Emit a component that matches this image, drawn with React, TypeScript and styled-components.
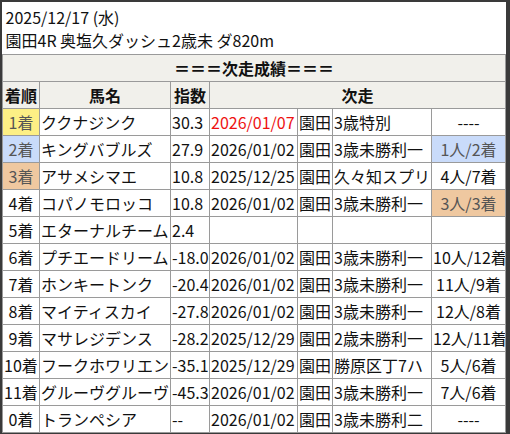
import React from "react";
import styled, { createGlobalStyle } from "styled-components";

const Global = createGlobalStyle`
  html, body { margin: 0; padding: 0; background: #3a3a3a; }
  body { font-family: "Noto Sans CJK JP", "Noto Sans", sans-serif; }
`;

const Frame = styled.div`
  padding: 2px 5px 3px 2px;
  width: 510px;
  box-sizing: border-box;
`;

const Table = styled.table`
  width: 503px;
  table-layout: fixed;
  border-collapse: collapse;
  background: #fff;
  font-size: 16px;
  color: #111;
`;

const Td = styled.td<{ $align?: "left" | "center"; $bg?: string; $color?: string; $bold?: boolean }>`
  border: 1px solid #9a9a9a;
  padding: 1px 1px;
  height: 24px;
  line-height: 24px;
  text-align: ${(p) => p.$align ?? "left"};
  background: ${(p) => p.$bg ?? "transparent"};
  color: ${(p) => p.$color ?? "#111"};
  font-weight: ${(p) => (p.$bold ? 700 : 400)};
  white-space: nowrap;
  overflow: hidden;
  vertical-align: middle;
`;

const TitleCell = styled.td`
  border: 1px solid #9a9a9a;
  border-top: none;
  border-left: none;
  border-right: none;
  padding: 4px 3px 2px;
  line-height: 23px;
  color: #111;
`;

const HeadCell = styled(Td)`
  background: #f1f0eb;
  font-weight: 700;
  text-align: center;
`;

type Row = {
  pos: string;
  posBg?: string;
  name: string;
  idx: string;
  date?: string;
  red?: boolean;
  venue?: string;
  race?: string;
  res?: string;
  resBg?: string;
};

const YELLOW = "#fdef85";
const BLUE = "#c9dbfa";
const PEACH = "#efc8a0";

const rows: Row[] = [
  { pos: "1着", posBg: YELLOW, name: "ククナジンク", idx: "30.3", date: "2026/01/07", red: true, venue: "園田", race: "3歳特別", res: "----" },
  { pos: "2着", posBg: BLUE, name: "キングバブルズ", idx: "27.9", date: "2026/01/02", venue: "園田", race: "3歳未勝利一", res: "1人/2着", resBg: BLUE },
  { pos: "3着", posBg: PEACH, name: "アサメシマエ", idx: "10.8", date: "2025/12/25", venue: "園田", race: "久々知スプリ", res: "4人/7着" },
  { pos: "4着", name: "コパノモロッコ", idx: "10.8", date: "2026/01/02", venue: "園田", race: "3歳未勝利一", res: "3人/3着", resBg: PEACH },
  { pos: "5着", name: "エターナルチーム", idx: "2.4" },
  { pos: "6着", name: "プチエードリーム", idx: "-18.0", date: "2026/01/02", venue: "園田", race: "3歳未勝利一", res: "10人/12着" },
  { pos: "7着", name: "ホンキートンク", idx: "-20.4", date: "2026/01/02", venue: "園田", race: "3歳未勝利一", res: "11人/9着" },
  { pos: "8着", name: "マイティスカイ", idx: "-27.8", date: "2026/01/02", venue: "園田", race: "3歳未勝利一", res: "12人/8着" },
  { pos: "9着", name: "マサレジデンス", idx: "-28.2", date: "2025/12/29", venue: "園田", race: "2歳未勝利一", res: "12人/11着" },
  { pos: "10着", name: "フークホワリエン", idx: "-35.1", date: "2025/12/29", venue: "園田", race: "勝原区丁7ハ", res: "5人/6着" },
  { pos: "11着", name: "グルーヴグルーヴ", idx: "-45.3", date: "2026/01/02", venue: "園田", race: "3歳未勝利一", res: "7人/6着" },
  { pos: "0着", name: "トランペシア", idx: "--", date: "2026/01/02", venue: "園田", race: "3歳未勝利二", res: "----" },
];

export default function App() {
  return (
    <>
      <Global />
      <Frame>
        <Table>
          <colgroup>
            <col style={{ width: 37 }} />
            <col style={{ width: 131 }} />
            <col style={{ width: 39 }} />
            <col style={{ width: 88 }} />
            <col style={{ width: 35 }} />
            <col style={{ width: 99 }} />
            <col style={{ width: 74 }} />
          </colgroup>
          <tbody>
            <tr>
              <TitleCell colSpan={7}>
                2025/12/17 (水)
                <br />
                園田4R 奥塩久ダッシュ2歳未 ダ820m
              </TitleCell>
            </tr>
            <tr>
              <HeadCell colSpan={7}>＝＝＝次走成績＝＝＝</HeadCell>
            </tr>
            <tr>
              <HeadCell>着順</HeadCell>
              <HeadCell>馬名</HeadCell>
              <HeadCell>指数</HeadCell>
              <HeadCell colSpan={4}>次走</HeadCell>
            </tr>
            {rows.map((r, i) => (
              <tr key={i}>
                <Td $align="center" $bg={r.posBg} $color={r.posBg ? "#555" : undefined}>
                  {r.pos}
                </Td>
                <Td>{r.name}</Td>
                <Td>{r.idx}</Td>
                <Td $color={r.red ? "#ee1111" : undefined}>{r.date ?? ""}</Td>
                <Td>{r.venue ?? ""}</Td>
                <Td>{r.race ?? ""}</Td>
                <Td $align="center" $bg={r.resBg} $color={r.resBg ? "#555" : undefined}>
                  {r.res ?? ""}
                </Td>
              </tr>
            ))}
          </tbody>
        </Table>
      </Frame>
    </>
  );
}
